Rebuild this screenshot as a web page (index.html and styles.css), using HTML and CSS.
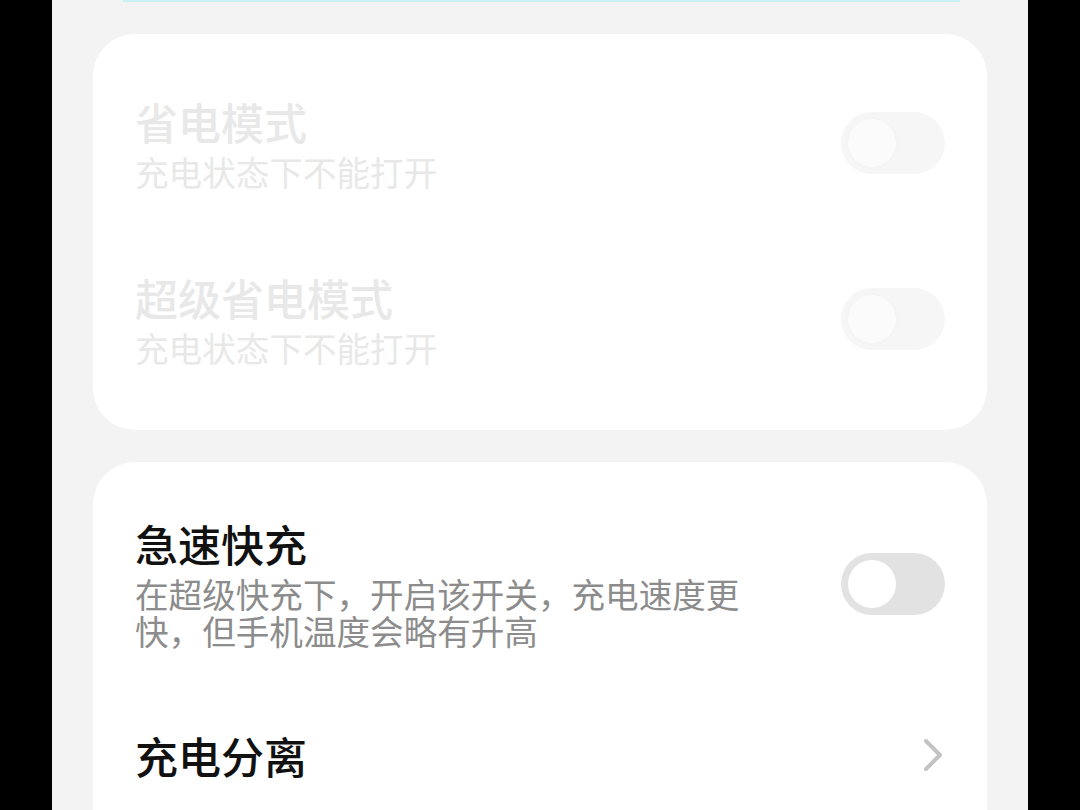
FILE: index.html
```html
<!DOCTYPE html>
<html lang="zh-CN">
<head>
  <meta charset="UTF-8" />
  <meta name="viewport" content="width=device-width, initial-scale=1.0"/>
  <title>电池与性能</title>
  <link rel="stylesheet" href="styles.css">
</head>
<body>
  <div class="screen">
    <div class="top-edge"></div>

    <!-- Power saving (locked while charging) -->
    <section class="card">
      <div class="row disabled">
        <div class="text">
          <div class="title">省电模式</div>
          <div class="sub">充电状态下不能打开</div>
        </div>
        <span class="switch"><span class="knob"></span></span>
      </div>
      <div class="row disabled">
        <div class="text">
          <div class="title">超级省电模式</div>
          <div class="sub">充电状态下不能打开</div>
        </div>
        <span class="switch"><span class="knob"></span></span>
      </div>
    </section>

    <!-- Charging options -->
    <section class="card">
      <div class="row">
        <div class="text">
          <div class="title">急速快充</div>
          <div class="sub">在超级快充下，开启该开关，充电速度更快，但手机温度会略有升高</div>
        </div>
        <span class="switch"><span class="knob"></span></span>
      </div>
      <div class="row row-link">
        <div class="text">
          <div class="title">充电分离</div>
        </div>
        <svg class="chevron" width="22" height="36" viewBox="0 0 22 36">
          <path d="M4 4 L18 18 L4 32" fill="none" stroke="#c3c3c3" stroke-width="4" stroke-linecap="round" stroke-linejoin="round"/>
        </svg>
      </div>
    </section>
  </div>
</body>
</html>
```

FILE: styles.css
```css
html, body {
  margin: 0;
  padding: 0;
  background: #000;
}
body {
  font-family: "Noto Sans CJK SC", "Noto Sans", sans-serif;
}
.screen {
  width: 976px;
  height: 810px;
  margin: 0 auto;
  background: #f3f3f3;
  overflow: hidden;
}
.top-edge {
  height: 2px;
  margin: 0 68px 32px 71px;
  background: #c8f2f6;
}
.card {
  background: #fff;
  border-radius: 42px;
  margin: 0 41px 32px;
  padding: 21px 42px 23px;
}
.row {
  display: flex;
  align-items: center;
  justify-content: space-between;
  min-height: 176px;
  padding: 35px 0;
  box-sizing: border-box;
}
.row-link {
  min-height: 142px;
}
.text {
  max-width: 630px;
}
.title {
  font-size: 43px;
  line-height: 50px;
  font-weight: 500;
  color: #111;
}
.sub {
  margin-top: 7px;
  font-size: 33.6px;
  line-height: 37px;
  color: #8c8c8c;
}
.disabled .title,
.disabled .sub {
  color: #e8e8e8;
}
.switch {
  position: relative;
  flex-shrink: 0;
  width: 104px;
  height: 62px;
  border-radius: 31px;
  background: #e2e2e2;
}
.knob {
  position: absolute;
  left: 7px;
  top: 7px;
  width: 48px;
  height: 48px;
  border-radius: 50%;
  background: #fff;
}
.disabled .switch {
  background: #f6f6f6;
}
.disabled .knob {
  background: #fbfbfb;
  box-shadow: 0 0 3px rgba(0,0,0,0.04);
}
.chevron {
  margin-right: 1px;
}
```
